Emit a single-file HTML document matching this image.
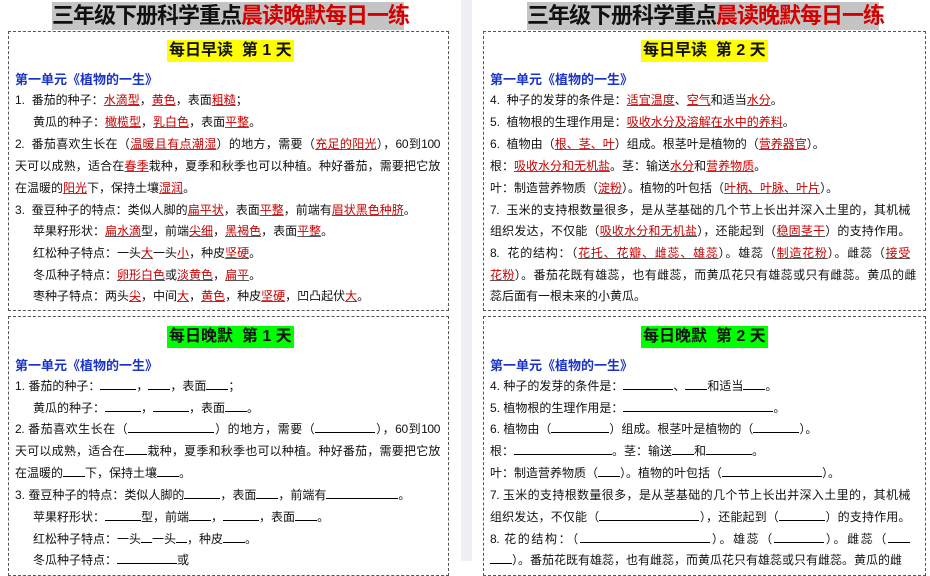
<!DOCTYPE html>
<html><head><meta charset="utf-8"><style>
*{margin:0;padding:0;box-sizing:border-box}
body{width:930px;height:561px;overflow:hidden;background:#fff;font-family:"Liberation Sans","Noto Sans CJK SC",sans-serif;color:#111;position:relative}
.div{position:absolute;left:461px;top:0;width:11px;height:561px;background:#eef0f4}
.title{position:absolute;top:2px;height:28px;background:#c4c4c4;font-size:22px;font-weight:bold;line-height:28px;white-space:nowrap;letter-spacing:-1px;text-align:center}
.title span{color:#d40000}
.box{position:absolute;border:1.5px dashed #555}
.hd{position:absolute;height:22px;line-height:22px;font-size:16px;font-weight:bold;white-space:nowrap;padding:0 2px}
.y{background:#ffff00}.g{background:#00ff00}
.sec{position:absolute;color:#1a33c8;font-size:13px;font-weight:bold;white-space:nowrap}
.l{position:absolute;font-size:12px;white-space:nowrap;line-height:14px}
.j{text-align:justify;text-align-last:justify;letter-spacing:-0.4px}
.r{color:#c80000;text-decoration:underline;text-decoration-color:#555}
.b{display:inline-block;border-bottom:1px solid #000;height:11px;vertical-align:baseline}
</style></head><body>
<div class="div"></div>
<div class="title" style="left:52px;width:352px">三年级下册科学重点<span>晨读晚默每日一练</span></div>
<div class="title" style="left:527px;width:352px">三年级下册科学重点<span>晨读晚默每日一练</span></div>

<div class="box" style="left:8px;top:31px;width:441px;height:280px"></div>
<div class="box" style="left:483px;top:31px;width:443px;height:280px"></div>
<div class="box" style="left:8px;top:316px;width:441px;height:260px"></div>
<div class="box" style="left:483px;top:316px;width:443px;height:260px"></div>

<div class="hd y" style="left:167px;top:40px">每日早读&nbsp; 第 1 天</div>
<div class="hd y" style="left:641px;top:40px">每日早读&nbsp; 第 2 天</div>
<div class="hd g" style="left:167px;top:326px">每日晚默&nbsp; 第 1 天</div>
<div class="hd g" style="left:641px;top:326px">每日晚默&nbsp; 第 2 天</div>

<div class="sec" style="left:15px;top:69px">第一单元《植物的一生》</div>
<div class="sec" style="left:490px;top:69px">第一单元《植物的一生》</div>
<div class="sec" style="left:15px;top:355px">第一单元《植物的一生》</div>
<div class="sec" style="left:490px;top:355px">第一单元《植物的一生》</div>

<!-- left morning -->
<div class="l" style="left:15px;top:93px">1.&nbsp; 番茄的种子：<span class="r">水滴型</span>，<span class="r">黄色</span>，表面<span class="r">粗糙</span>；</div>
<div class="l" style="left:33px;top:115px">黄瓜的种子：<span class="r">橄榄型</span>，<span class="r">乳白色</span>，表面<span class="r">平整</span>。</div>
<div class="l j" style="left:15px;top:137px;width:425px">2.&nbsp; 番茄喜欢生长在（<span class="r">温暖且有点潮湿</span>）的地方，需要（<span class="r">充足的阳光</span>），60到100</div>
<div class="l j" style="left:15px;top:159px;width:425px">天可以成熟，适合在<span class="r">春季</span>栽种，夏季和秋季也可以种植。种好番茄，需要把它放</div>
<div class="l" style="left:15px;top:181px">在温暖的<span class="r">阳光</span>下，保持土壤<span class="r">湿润</span>。</div>
<div class="l" style="left:15px;top:203px">3.&nbsp; 蚕豆种子的特点：类似人脚的<span class="r">扁平状</span>，表面<span class="r">平整</span>，前端有<span class="r">眉状黑色种脐</span>。</div>
<div class="l" style="left:33px;top:224px">苹果籽形状：<span class="r">扁水滴</span>型，前端<span class="r">尖细</span>，<span class="r">黑褐色</span>，表面<span class="r">平整</span>。</div>
<div class="l" style="left:33px;top:246px">红松种子特点：一头<span class="r">大</span>一头<span class="r">小</span>，种皮<span class="r">坚硬</span>。</div>
<div class="l" style="left:33px;top:268px">冬瓜种子特点：<span class="r">卵形白色</span>或<span class="r">淡黄色</span>，<span class="r">扁平</span>。</div>
<div class="l" style="left:33px;top:289px">枣种子特点：两头<span class="r">尖</span>，中间<span class="r">大</span>，<span class="r">黄色</span>，种皮<span class="r">坚硬</span>，凹凸起伏<span class="r">大</span>。</div>

<!-- right morning -->
<div class="l" style="left:490px;top:93px">4.&nbsp; 种子的发芽的条件是：<span class="r">适宜温度</span>、<span class="r">空气</span>和适当<span class="r">水分</span>。</div>
<div class="l" style="left:490px;top:115px">5.&nbsp; 植物根的生理作用是：<span class="r">吸收水分及溶解在水中的养料</span>。</div>
<div class="l" style="left:490px;top:137px">6.&nbsp; 植物由（<span class="r">根、茎、叶</span>）组成。根茎叶是植物的（<span class="r">营养器官</span>）。</div>
<div class="l" style="left:490px;top:159px">根：<span class="r">吸收水分和无机盐</span>。茎：输送<span class="r">水分</span>和<span class="r">营养物质</span>。</div>
<div class="l" style="left:490px;top:181px">叶：制造营养物质（<span class="r">淀粉</span>）。植物的叶包括（<span class="r">叶柄、叶脉、叶片</span>）。</div>
<div class="l j" style="left:490px;top:203px;width:420px">7.&nbsp; 玉米的支持根数量很多，是从茎基础的几个节上长出并深入土里的，其机械</div>
<div class="l j" style="left:490px;top:224px;width:420px">组织发达，不仅能（<span class="r">吸收水分和无机盐</span>），还能起到（<span class="r">稳固茎干</span>）的支持作用。</div>
<div class="l j" style="left:490px;top:246px;width:420px">8.&nbsp; 花的结构：（<span class="r">花托、花瓣、雌蕊、雄蕊</span>）。雄蕊（<span class="r">制造花粉</span>）。雌蕊（<span class="r">接受</span></div>
<div class="l j" style="left:490px;top:268px;width:426px"><span class="r">花粉</span>）。番茄花既有雄蕊，也有雌蕊，而黄瓜花只有雄蕊或只有雌蕊。黄瓜的雌</div>
<div class="l" style="left:490px;top:289px">蕊后面有一根未来的小黄瓜。</div>

<!-- left evening -->
<div class="l" style="left:15px;top:379px">1. 番茄的种子：<span class="b" style="width:36px"></span>，<span class="b" style="width:22px"></span>，表面<span class="b" style="width:22px"></span>；</div>
<div class="l" style="left:33px;top:401px">黄瓜的种子：<span class="b" style="width:36px"></span>，<span class="b" style="width:36px"></span>，表面<span class="b" style="width:22px"></span>。</div>
<div class="l j" style="left:15px;top:422px;width:425px">2. 番茄喜欢生长在（<span class="b" style="width:86px"></span>）的地方，需要（<span class="b" style="width:60px"></span>），60到100</div>
<div class="l j" style="left:15px;top:444px;width:425px">天可以成熟，适合在<span class="b" style="width:22px"></span>栽种，夏季和秋季也可以种植。种好番茄，需要把它放</div>
<div class="l" style="left:15px;top:466px">在温暖的<span class="b" style="width:22px"></span>下，保持土壤<span class="b" style="width:22px"></span>。</div>
<div class="l" style="left:15px;top:488px">3. 蚕豆种子的特点：类似人脚的<span class="b" style="width:36px"></span>，表面<span class="b" style="width:22px"></span>，前端有<span class="b" style="width:72px"></span>。</div>
<div class="l" style="left:33px;top:510px">苹果籽形状：<span class="b" style="width:36px"></span>型，前端<span class="b" style="width:22px"></span>，<span class="b" style="width:36px"></span>，表面<span class="b" style="width:22px"></span>。</div>
<div class="l" style="left:33px;top:532px">红松种子特点：一头<span class="b" style="width:11px"></span>一头<span class="b" style="width:11px"></span>，种皮<span class="b" style="width:22px"></span>。</div>
<div class="l" style="left:33px;top:553px">冬瓜种子特点：<span class="b" style="width:60px"></span>或</div>

<!-- right evening -->
<div class="l" style="left:490px;top:379px">4. 种子的发芽的条件是：<span class="b" style="width:50px"></span>、<span class="b" style="width:22px"></span>和适当<span class="b" style="width:22px"></span>。</div>
<div class="l" style="left:490px;top:401px">5. 植物根的生理作用是：<span class="b" style="width:150px"></span>。</div>
<div class="l" style="left:490px;top:422px">6. 植物由（<span class="b" style="width:58px"></span>）组成。根茎叶是植物的（<span class="b" style="width:46px"></span>）。</div>
<div class="l" style="left:490px;top:444px">根：<span class="b" style="width:98px"></span>。茎：输送<span class="b" style="width:22px"></span>和<span class="b" style="width:46px"></span>。</div>
<div class="l" style="left:490px;top:466px">叶：制造营养物质（<span class="b" style="width:22px"></span>）。植物的叶包括（<span class="b" style="width:100px"></span>）。</div>
<div class="l j" style="left:490px;top:488px;width:420px">7. 玉米的支持根数量很多，是从茎基础的几个节上长出并深入土里的，其机械</div>
<div class="l j" style="left:490px;top:510px;width:420px">组织发达，不仅能（<span class="b" style="width:100px"></span>），还能起到（<span class="b" style="width:46px"></span>）的支持作用。</div>
<div class="l j" style="left:490px;top:532px;width:420px">8. 花的结构：（<span class="b" style="width:130px"></span>）。雄蕊（<span class="b" style="width:50px"></span>）。雌蕊（<span class="b" style="width:22px"></span></div>
<div class="l" style="left:490px;top:553px"><span class="b" style="width:22px"></span>）。番茄花既有雄蕊，也有雌蕊，而黄瓜花只有雄蕊或只有雌蕊。黄瓜的雌</div>
</body></html>
